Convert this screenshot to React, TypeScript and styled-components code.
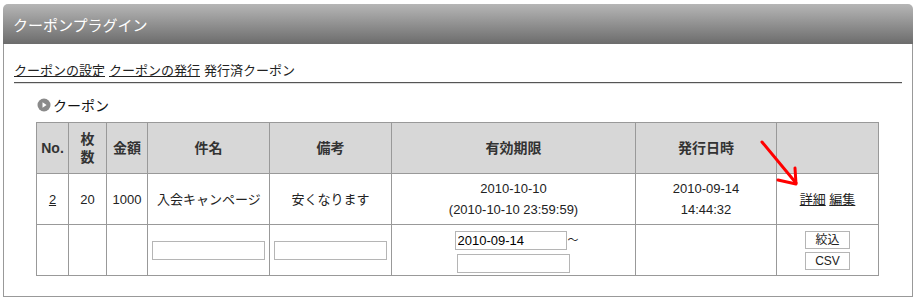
import styled, { createGlobalStyle } from "styled-components";

const GlobalStyle = createGlobalStyle`
  body {
    margin: 0;
    background: #fff;
    font-family: "Liberation Sans", "Noto Sans CJK JP", sans-serif;
    font-size: 13px;
    color: #222;
  }
`;

const Panel = styled.div`
  margin: 4px 0 0 3px;
  width: 910px;
  box-sizing: border-box;
`;

const Header = styled.div`
  height: 40px;
  border-radius: 5px 5px 0 0;
  background: linear-gradient(#b6b6b6, #6c6c6c);
  color: #fff;
  font-size: 15px;
  display: flex;
  align-items: center;
  padding-left: 10px;
`;

const Body = styled.div`
  border: 1px solid #999;
  border-top: none;
  height: 253px;
  box-sizing: border-box;
  padding: 13px 10px 0 10px;
`;

const Nav = styled.div`
  display: flex;
  gap: 4px;
  height: 25px;
  align-items: center;
  border-bottom: 1px solid #555;
  box-shadow: 0 1px 0 #ddd;
`;

const NavLink = styled.a<{ $active?: boolean }>`
  color: #222;
  text-decoration: ${(p) => (p.$active ? "none" : "underline")};
`;

const Section = styled.div`
  padding: 12px 0 0 22px;
  position: relative;
`;

const Title = styled.div`
  display: flex;
  align-items: center;
  gap: 2px;
  height: 20px;
  font-size: 14px;
  color: #111;
  margin-bottom: 7px;
  margin-left: 1px;
`;

const Table = styled.table`
  border-collapse: collapse;
  table-layout: fixed;
  width: 843px;
  th,
  td {
    border: 1px solid #999;
    text-align: center;
    padding: 0;
    height: 50px;
  }
  th {
    background: #d7d7d7;
    color: #333;
    font-weight: bold;
    font-size: 14px;
    line-height: 18px;
  }
  td {
    line-height: 21px;
  }
`;

const Cell = styled.td<{ $left?: boolean }>`
  text-align: ${(p) => (p.$left ? "left" : "center")} !important;
  padding-left: ${(p) => (p.$left ? "9px" : "0")} !important;
`;

const UL = styled.a`
  color: #222;
  text-decoration: underline;
`;

const TextInput = styled.input<{ $w: number }>`
  width: ${(p) => p.$w}px;
  height: 19px;
  box-sizing: border-box;
  border: 1px solid #b5b5b5;
  padding: 0 2px;
  font-family: "Liberation Sans", "Noto Sans CJK JP", sans-serif;
  font-size: 13px;
  display: block;
  margin: 0 auto;
`;

const DateRow = styled.div`
  display: flex;
  align-items: center;
  justify-content: center;
  gap: 1px;
  margin-left: 6px;
  margin-bottom: 3px;
`;

const Tilde = styled.span`
  font-size: 11px;
`;

const DateBox = styled.div`
  display: flex;
  flex-direction: column;
  align-items: center;
  padding-top: 3px;
`;

const Buttons = styled.div`
  display: flex;
  flex-direction: column;
  align-items: center;
  gap: 3px;
`;

const Btn = styled.button`
  width: 45px;
  height: 18px;
  padding: 0;
  background: #fff;
  border: 1px solid #b5b5b5;
  font-family: "Liberation Sans", "Noto Sans CJK JP", sans-serif;
  font-size: 12px;
  color: #222;
  line-height: 16px;
`;

const Arrow = styled.svg`
  position: absolute;
  left: 745px;
  top: 56px;
`;

function PlayIcon() {
  return (
    <svg width="14" height="14" viewBox="0 0 14 14">
      <circle cx="7" cy="7" r="6.5" fill="#8a8a8a" />
      <path d="M5.5 4.3 L9.6 7 L5.5 9.7 Z" fill="#fff" />
    </svg>
  );
}

export default function App() {
  return (
    <>
      <GlobalStyle />
      <Panel>
        <Header>クーポンプラグイン</Header>
        <Body>
          <Nav>
            <NavLink href="#">クーポンの設定</NavLink>
            <NavLink href="#">クーポンの発行</NavLink>
            <NavLink $active>発行済クーポン</NavLink>
          </Nav>
          <Section>
            <Title>
              <PlayIcon />
              クーポン
            </Title>
            <Table>
              <colgroup>
                <col style={{ width: 32 }} />
                <col style={{ width: 38 }} />
                <col style={{ width: 41 }} />
                <col style={{ width: 122 }} />
                <col style={{ width: 122 }} />
                <col style={{ width: 244 }} />
                <col style={{ width: 141 }} />
                <col style={{ width: 102 }} />
              </colgroup>
              <thead>
                <tr>
                  <th>No.</th>
                  <th>
                    枚<br />数
                  </th>
                  <th>金額</th>
                  <th>件名</th>
                  <th>備考</th>
                  <th>有効期限</th>
                  <th>発行日時</th>
                  <th></th>
                </tr>
              </thead>
              <tbody>
                <tr>
                  <td>
                    <UL href="#">2</UL>
                  </td>
                  <td>20</td>
                  <td>1000</td>
                  <Cell $left>入会キャンページ</Cell>
                  <td>安くなります</td>
                  <td>
                    2010-10-10
                    <br />
                    (2010-10-10 23:59:59)
                  </td>
                  <td>
                    2010-09-14
                    <br />
                    14:44:32
                  </td>
                  <td>
                    <UL href="#">詳細</UL> <UL href="#">編集</UL>
                  </td>
                </tr>
                <tr>
                  <td></td>
                  <td></td>
                  <td></td>
                  <td>
                    <TextInput $w={113} />
                  </td>
                  <td>
                    <TextInput $w={113} />
                  </td>
                  <td>
                    <DateBox>
                      <DateRow>
                        <TextInput $w={112} defaultValue="2010-09-14" />
                        <Tilde>～</Tilde>
                      </DateRow>
                      <TextInput $w={113} />
                    </DateBox>
                  </td>
                  <td></td>
                  <td>
                    <Buttons>
                      <Btn>絞込</Btn>
                      <Btn>CSV</Btn>
                    </Buttons>
                  </td>
                </tr>
              </tbody>
            </Table>
            <Arrow width="60" height="60" viewBox="0 0 60 60">
              <path
                d="M3 3 L37 44"
                stroke="#f00"
                strokeWidth="3"
                strokeLinecap="round"
              />
              <path
                d="M19 41 L37 45 L36 29"
                stroke="#f00"
                strokeWidth="3"
                fill="none"
                strokeLinecap="round"
                strokeLinejoin="round"
              />
            </Arrow>
          </Section>
        </Body>
      </Panel>
    </>
  );
}
